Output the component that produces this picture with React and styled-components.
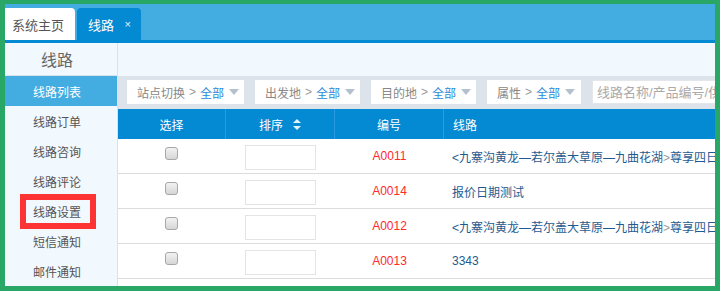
import React from "react";
import styled, { createGlobalStyle } from "styled-components";

// route list admin screen, annotated with a red box on one menu item

const GlobalStyle = createGlobalStyle`
    html, body {
        margin: 0;
        padding: 0;
    }
    body {
        background: #28a766;
        font-family: "Liberation Sans", "Noto Sans CJK SC", sans-serif;
        font-size: 12px;
    }
    #root {
        padding: 4px 5px 5px 5px;
    }
`;

const menu = ["线路列表", "线路订单", "线路咨询", "线路评论", "线路设置", "短信通知", "邮件通知"];

const filters = [
    { label: "站点切换", width: 117 },
    { label: "出发地", width: 105 },
    { label: "目的地", width: 105 },
    { label: "属性", width: 94 },
];

const longRoute = { head: "<九寨沟黄龙—若尔盖大草原—九曲花湖", tail: "尊享四日游纯玩团" };

const rows = [
    { code: "A0011", route: longRoute },
    { code: "A0014", text: "报价日期测试" },
    { code: "A0012", route: longRoute },
    { code: "A0013", text: "3343" },
];

const App = () => {
    return (
        <>
            <GlobalStyle />
            <Frame>
                <TabBar>
                    <Tab>系统主页</Tab>
                    <Tab active>
                        线路<Close>×</Close>
                    </Tab>
                </TabBar>
                <Body>
                    <Sidebar>
                        <SideHead>线路</SideHead>
                        {menu.map((m, i) => (
                            <SideItem key={m} active={i === 0}>
                                {m}
                                {m === "线路设置" && <Marker />}
                            </SideItem>
                        ))}
                    </Sidebar>
                    <Main>
                        <MainHead />
                        <FilterBar>
                            {filters.map((f) => (
                                <FilterBox key={f.label} w={f.width}>
                                    <span>{f.label}</span>
                                    <Gt>&gt;</Gt>
                                    <All>全部</All>
                                    <Caret />
                                </FilterBox>
                            ))}
                            <Search placeholder="线路名称/产品编号/供应商" />
                        </FilterBar>
                        <Table>
                            <HeadRow>
                                <HeadCell>选择</HeadCell>
                                <HeadCell>
                                    排序
                                    <SortIcon width="8" height="11" viewBox="0 0 8 11">
                                        <path d="M4 0 L8 4 L0 4 Z" fill="#e6f3fb" />
                                        <path d="M0 7 L8 7 L4 11 Z" fill="#e6f3fb" />
                                    </SortIcon>
                                </HeadCell>
                                <HeadCell>编号</HeadCell>
                                <HeadCell left>线路</HeadCell>
                            </HeadRow>
                            {rows.map((r) => (
                                <Row key={r.code}>
                                    <Cell>
                                        <Check />
                                    </Cell>
                                    <Cell>
                                        <SortInput />
                                    </Cell>
                                    <Cell>
                                        <Code>{r.code}</Code>
                                    </Cell>
                                    <Cell left>
                                        {r.route ? (
                                            <Route>
                                                {r.route.head}
                                                <RouteGt>&gt;</RouteGt>
                                                {r.route.tail}
                                            </Route>
                                        ) : (
                                            <Route>{r.text}</Route>
                                        )}
                                    </Cell>
                                </Row>
                            ))}
                        </Table>
                    </Main>
                </Body>
            </Frame>
        </>
    );
};

const Frame = styled.div`
    width: 710px;
    height: 282px;
    overflow: hidden;
    background: #fff;
    display: flex;
    flex-direction: column;
`;

const TabBar = styled.div`
    height: 36px;
    flex-shrink: 0;
    background: #43ade2;
    border-bottom: 3px solid #0489d3;
    display: flex;
    align-items: flex-end;
    gap: 2px;
`;

const Tab = styled.div`
    height: 32px;
    flex-shrink: 0;
    display: flex;
    align-items: center;
    box-sizing: border-box;
    white-space: nowrap;
    padding: ${(p) => (p.active ? "0 10px 0 11px" : "0 0 0 7px")};
    width: ${(p) => (p.active ? "64px" : "70px")};
    background: ${(p) => (p.active ? "#0489d3" : "#fff")};
    color: ${(p) => (p.active ? "#fff" : "#555")};
    font-size: 13px;
    border-radius: ${(p) => (p.active ? "4px 4px 0 0" : "0 4px 0 0")};
`;

const Close = styled.span`
    margin-left: auto;
    font-size: 11px;
    color: #e8f4fb;
`;

const Body = styled.div`
    flex: 1;
    display: flex;
    min-height: 0;
`;

const Sidebar = styled.div`
    width: 112px;
    flex-shrink: 0;
    background: #f1f8fe;
    border-right: 1px solid #d6e2ec;
`;

const SideHead = styled.div`
    height: 32px;
    border-bottom: 1px solid #d6e2ec;
    display: flex;
    align-items: center;
    justify-content: center;
    padding-right: 8px;
    font-size: 16px;
    color: #666;
`;

const SideItem = styled.div`
    position: relative;
    height: 30px;
    display: flex;
    align-items: center;
    justify-content: center;
    padding-right: 8px;
    font-size: 12px;
    color: ${(p) => (p.active ? "#fff" : "#555")};
    background: ${(p) => (p.active ? "#43ade2" : "transparent")};
`;

const Marker = styled.div`
    position: absolute;
    left: 15px;
    top: -2px;
    width: 76px;
    height: 35px;
    box-sizing: border-box;
    border: 6px solid #fe3434;
    pointer-events: none;
`;

const Main = styled.div`
    flex: 1;
    min-width: 0;
    overflow: hidden;
    display: flex;
    flex-direction: column;
`;

const MainHead = styled.div`
    height: 33px;
    flex-shrink: 0;
    background: #f1f8fe;
`;

const FilterBar = styled.div`
    height: 24px;
    flex-shrink: 0;
    padding: 4px 0 5px 9px;
    background: #dce3ea;
    display: flex;
    gap: 11px;
`;

const FilterBox = styled.div`
    width: ${(p) => p.w}px;
    flex-shrink: 0;
    box-sizing: border-box;
    background: #fff;
    display: flex;
    align-items: center;
    padding-left: 10px;
    color: #888;
    font-size: 12px;
    white-space: nowrap;
`;

const Gt = styled.span`
    color: #999;
    margin: 0 4px;
`;

const All = styled.span`
    color: #2b8ad9;
`;

const Caret = styled.span`
    width: 0;
    height: 0;
    margin-left: 5px;
    border-left: 5px solid transparent;
    border-right: 5px solid transparent;
    border-top: 6px solid #b4c0cd;
`;

const Search = styled.input`
    width: 180px;
    flex-shrink: 0;
    height: 24px;
    box-sizing: border-box;
    border: 1px solid #e3e7eb;
    padding: 0 4px;
    font-family: inherit;
    font-size: 13px;
    outline: none;
    &::placeholder {
        color: #aaa;
    }
`;

const Table = styled.div`
    width: 900px;
`;

const HeadRow = styled.div`
    display: grid;
    grid-template-columns: 108px 109px 109px 1fr;
    height: 30px;
    background: #0489d3;
`;

const HeadCell = styled.div`
    display: flex;
    align-items: center;
    justify-content: ${(p) => (p.left ? "flex-start" : "center")};
    padding-left: ${(p) => (p.left ? "9px" : "0")};
    color: #fff;
    font-size: 12px;
    border-right: 1px solid #2a9be0;
`;

const SortIcon = styled.svg`
    margin-left: 10px;
`;

const Row = styled.div`
    display: grid;
    grid-template-columns: 108px 109px 109px 1fr;
    height: 34px;
    border-bottom: 1px solid #dcdcdc;
`;

const Cell = styled.div`
    display: flex;
    align-items: center;
    justify-content: ${(p) => (p.left ? "flex-start" : "center")};
    padding-left: ${(p) => (p.left ? "8px" : "0")};
    white-space: nowrap;
    overflow: hidden;
`;

const Check = styled.span`
    width: 11px;
    height: 11px;
    margin: -5px 0 0 -2px;
    border: 1px solid #a7a7a7;
    border-radius: 3px;
    background: linear-gradient(#f2f2f2, #d6d6d6);
`;

const SortInput = styled.div`
    width: 71px;
    height: 25px;
    margin-top: 2px;
    box-sizing: border-box;
    border: 1px solid #e4e4e4;
    background: #fff;
`;

const Code = styled.span`
    color: #ff2a2a;
    font-size: 12px;
`;

const Route = styled.span`
    color: #1f5b90;
    font-size: 12px;
`;

const RouteGt = styled.span`
    color: #999;
`;

export default App;
